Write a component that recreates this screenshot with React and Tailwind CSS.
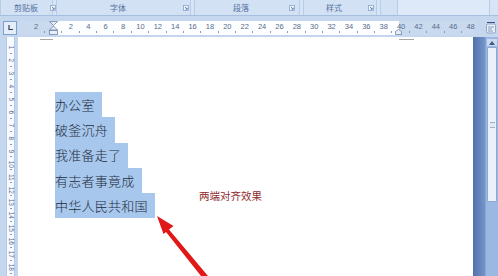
import React from 'react';

const cjk = { fontFamily: '"Noto Sans CJK SC", "Noto Sans", sans-serif' };
const latin = { fontFamily: '"Liberation Sans", Arial, sans-serif' };

const Launcher = () => (
  <svg width="6" height="6" viewBox="0 0 6 6" className="shrink-0">
    <rect x="0.5" y="0.5" width="5" height="5" fill="#eef4fb" stroke="#8aa6cc" strokeWidth="0.8" />
    <path d="M2 2 L4.2 4.2 M4.2 2.6 V4.2 H2.6" stroke="#4f6f9f" strokeWidth="0.8" fill="none" />
  </svg>
);

const groups = [
  { label: '剪贴板', w: 'w-[53px]', pl: 'pl-[13px]', gap: 'gap-[12px]' },
  { label: '字体', w: 'w-[135px]', pl: 'pl-[53px]', gap: 'gap-[57px]' },
  { label: '段落', w: 'w-[106px]', pl: 'pl-[38px]', gap: 'gap-[40px]' },
  { label: '样式', w: 'w-[74px]', pl: 'pl-[22px]', gap: 'gap-[26px]' },
];

const hCells = ['2', 'indent', ...Array.from({ length: 24 }, (_, i) => String((i + 1) * 2))];
const vNums = Array.from({ length: 18 }, (_, i) => String(i + 1));

const IndentMarker = () => (
  <svg width="9" height="14" viewBox="0 0 9 14" className="absolute top-0 left-[4px]">
    <path d="M0.5 0.5 H8.5 L4.5 4.5 Z" fill="#e8eef7" stroke="#6f87ab" strokeWidth="0.8" />
    <path d="M4.5 5 L8.5 9 H0.5 Z" fill="#e8eef7" stroke="#6f87ab" strokeWidth="0.8" />
    <rect x="0.5" y="9.5" width="8" height="4" fill="#e8eef7" stroke="#6f87ab" strokeWidth="0.8" />
  </svg>
);

export default function App() {
  return (
    <div className="relative w-[498px] h-[276px] overflow-hidden bg-[#c4d7ef] flex flex-col" style={cjk}>
      {/* ribbon group labels */}
      <div className="h-[16px] flex items-stretch bg-[#d6e4f5] border-b border-[#a7bfdf] shrink-0">
        {groups.map((g, i) => (
          <div key={i} className={`${g.w} ${g.pl} ${g.gap} flex items-center border-x border-[#b7cce8] bg-[#d2e1f4] mr-[3px] shrink-0`}>
            <span className="text-[8px] leading-none text-[#56729f] whitespace-nowrap">{g.label}</span>
            <Launcher />
          </div>
        ))}
        <div className="w-[18px] border-x border-[#b7cce8] bg-[#d2e1f4] shrink-0" />
        <div className="flex-1 bg-[#dde9f8] border-r border-[#b7cce8]" />
        <div className="w-[8px] bg-[#d6e4f5]" />
      </div>

      {/* ruler row */}
      <div className="h-[21px] flex items-center shrink-0 bg-[#c4d7ef] pt-[2px]">
        <div className="ml-[3px] w-[14px] h-[14px] border border-[#7f9fcc] bg-[#e4edf9] flex items-center justify-center shrink-0">
          <svg width="7" height="7" viewBox="0 0 7 7">
            <path d="M2 1 V5.5 H6" stroke="#2b3f5f" strokeWidth="1.2" fill="none" />
          </svg>
        </div>
        <div className="ml-[1px] w-[457px] h-[14px] relative flex shrink-0 overflow-hidden">
          <div className="w-[35px] bg-[#c9daef] shrink-0" />
          <div className="w-[346px] bg-[#fdfeff] shrink-0" />
          <div className="flex-1 bg-[#c9daef]" />
          <div className="absolute inset-0 flex pl-[9.5px]">
            {hCells.map((c, i) => (
              <div key={i} className="relative w-[17.39px] shrink-0 flex justify-center">
                {c === 'indent' ? (
                  <IndentMarker />
                ) : (
                  <span className="text-[7.5px] leading-none text-[#566b8c] pt-[2px]" style={latin}>{c}</span>
                )}
                <span className="absolute right-0 bottom-[2px] w-px h-[2px] bg-[#8a9bb5]" />
              </div>
            ))}
          </div>
          <svg width="7" height="6" viewBox="0 0 7 6" className="absolute left-[377px] bottom-0">
            <path d="M0.5 5.5 V2.5 L3.5 0.5 L6.5 2.5 V5.5 Z" fill="#e8eef7" stroke="#6f87ab" strokeWidth="0.8" />
          </svg>
        </div>
        <div className="ml-[11px] w-[10px] h-[13px] flex items-center justify-center shrink-0">
          <svg width="10" height="12" viewBox="0 0 10 12">
            <rect x="0.5" y="2" width="9" height="9" rx="1.5" fill="#e9f0fa" stroke="#7b95bd" strokeWidth="0.8" />
            <path d="M2 5 H8 M2 7 H6 M2 9 H7" stroke="#6d84aa" strokeWidth="0.8" />
            <path d="M1 0.5 H9" stroke="#3b5480" strokeWidth="1" />
          </svg>
        </div>
      </div>

      {/* body */}
      <div className="flex-1 flex min-h-0">
        <div className="w-[18px] shrink-0 flex pl-[6px] bg-[#c4d7ef]">
          <div className="w-[9px] bg-[#f7fafe] border-x border-[#b3c8e6] flex flex-col items-center pt-[4px]">
            {vNums.map((n) => (
              <div key={n} className="h-[12.94px] shrink-0 flex items-center justify-center relative w-full">
                <span className="rotate-90 text-[6.5px] leading-none text-[#566b8c]" style={latin}>{n}</span>
                <span className="absolute bottom-0 left-[3px] w-[2px] h-px bg-[#8a9bb5]" />
              </div>
            ))}
          </div>
        </div>

        <div className="w-[455px] shrink-0 bg-white relative">
          <div className="flex pl-[22px] pt-[2px]">
            <span className="w-[13px] h-px bg-[#a9a9a9]" />
            <span className="w-[346px]" />
            <span className="w-[15px] h-px bg-[#a9a9a9]" />
          </div>
          <div className="pl-[37px] pt-[52px] flex flex-col items-start">
            {['办公室', '破釜沉舟', '我准备走了', '有志者事竟成', '中华人民共和国'].map((t) => (
              <div key={t} className="h-[25.3px] flex items-center bg-[#a7c7ed] pr-[7px] text-[13px] font-light tracking-[0.25px] text-[#1e2c3c]">
                {t}
              </div>
            ))}
          </div>
        </div>

        <div className="w-[12px] shrink-0 bg-gradient-to-r from-[#4f72ab] to-[#7595c9]" />

        <div className="w-[13px] shrink-0 bg-[#9bb8e2] flex flex-col items-center pt-[2px] border-l border-[#87a6d3]">
          <div className="w-[10px] h-[7px] flex items-center justify-center bg-[#c9daf1]">
            <svg width="6" height="4" viewBox="0 0 6 4"><path d="M0 4 L3 0 L6 4 Z" fill="#3e5a86" /></svg>
          </div>
          <div className="mt-[1px] w-[10px] h-[155px] bg-[#eaf1fb] border border-[#8eaad3] rounded-[1px] flex items-center justify-center">
            <div className="w-[5px] h-[6px] border-y border-[#9ab0cf] bg-[#dfe8f5]" />
          </div>
        </div>
      </div>

      {/* annotation */}
      <span className="absolute left-[199px] top-[191px] text-[10.5px] leading-none text-[#8e2b2e] whitespace-nowrap">两端对齐效果</span>
      <svg className="absolute left-0 top-0 pointer-events-none" width="498" height="276" viewBox="0 0 498 276">
        <polygon points="157,216 173.5,226 169,229.5 208,276 201,276 166,232 163.5,234" fill="#e01818" />
      </svg>
    </div>
  );
}
